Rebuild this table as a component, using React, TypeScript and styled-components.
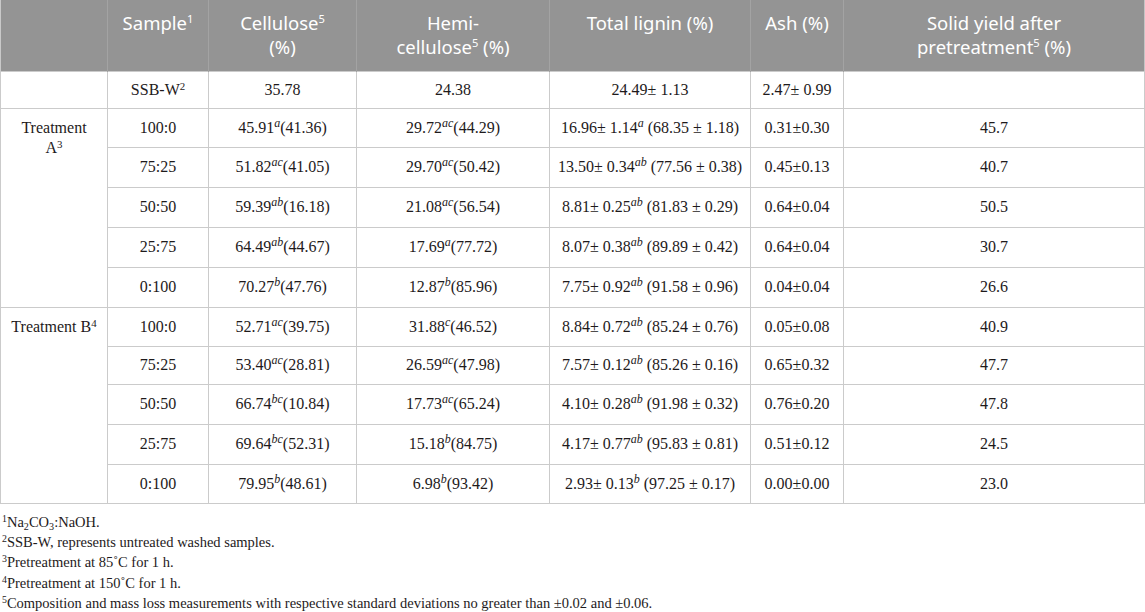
import React from "react";
import styled, { createGlobalStyle } from "styled-components";

const GlobalStyle = createGlobalStyle`
  html, body {
    margin: 0;
    padding: 0;
    background: #ffffff;
  }
  body {
    font-family: "Liberation Serif", "Times New Roman", serif;
    color: #231f20;
  }
`;

type Mark = [string, string, string];

type Row = {
  sample: string;
  cel: Mark;
  hemi: Mark;
  lig: Mark;
  ash: string;
  solid: string;
};

const groupA: Row[] = [
  { sample: "100:0", cel: ["45.91", "a", "41.36"], hemi: ["29.72", "ac", "44.29"], lig: ["16.96± 1.14", "a", "68.35 ± 1.18"], ash: "0.31±0.30", solid: "45.7" },
  { sample: "75:25", cel: ["51.82", "ac", "41.05"], hemi: ["29.70", "ac", "50.42"], lig: ["13.50± 0.34", "ab", "77.56 ± 0.38"], ash: "0.45±0.13", solid: "40.7" },
  { sample: "50:50", cel: ["59.39", "ab", "16.18"], hemi: ["21.08", "ac", "56.54"], lig: ["8.81± 0.25", "ab", "81.83 ± 0.29"], ash: "0.64±0.04", solid: "50.5" },
  { sample: "25:75", cel: ["64.49", "ab", "44.67"], hemi: ["17.69", "a", "77.72"], lig: ["8.07± 0.38", "ab", "89.89 ± 0.42"], ash: "0.64±0.04", solid: "30.7" },
  { sample: "0:100", cel: ["70.27", "b", "47.76"], hemi: ["12.87", "b", "85.96"], lig: ["7.75± 0.92", "ab", "91.58 ± 0.96"], ash: "0.04±0.04", solid: "26.6" },
];

const groupB: Row[] = [
  { sample: "100:0", cel: ["52.71", "ac", "39.75"], hemi: ["31.88", "c", "46.52"], lig: ["8.84± 0.72", "ab", "85.24 ± 0.76"], ash: "0.05±0.08", solid: "40.9" },
  { sample: "75:25", cel: ["53.40", "ac", "28.81"], hemi: ["26.59", "ac", "47.98"], lig: ["7.57± 0.12", "ab", "85.26 ± 0.16"], ash: "0.65±0.32", solid: "47.7" },
  { sample: "50:50", cel: ["66.74", "bc", "10.84"], hemi: ["17.73", "ac", "65.24"], lig: ["4.10± 0.28", "ab", "91.98 ± 0.32"], ash: "0.76±0.20", solid: "47.8" },
  { sample: "25:75", cel: ["69.64", "bc", "52.31"], hemi: ["15.18", "b", "84.75"], lig: ["4.17± 0.77", "ab", "95.83 ± 0.81"], ash: "0.51±0.12", solid: "24.5" },
  { sample: "0:100", cel: ["79.95", "b", "48.61"], hemi: ["6.98", "b", "93.42"], lig: ["2.93± 0.13", "b", "97.25 ± 0.17"], ash: "0.00±0.00", solid: "23.0" },
];

const Page = styled.div`
  width: 1145px;
`;

const Table = styled.table`
  width: 1144px;
  border-collapse: collapse;
  table-layout: fixed;
  border-left: 1px solid #c9c9c9;
  border-right: 1px solid #c4c4c4;
`;

const HeadCell = styled.th`
  background: #949494;
  color: #ffffff;
  font-family: "Noto Sans", "Open Sans", sans-serif;
  font-weight: 400;
  font-size: 18.5px;
  line-height: 24px;
  text-align: center;
  vertical-align: top;
  padding: 11px 2px 0;
  height: 71px;
  box-sizing: border-box;
  border-left: 1px solid #a3a3a3;
  white-space: nowrap;
  &:first-child {
    border-left: none;
  }
`;

const BodyRow = styled.tr<{ $h: number }>`
  height: ${(p) => p.$h}px;
`;

const Cell = styled.td`
  font-size: 16px;
  line-height: 20px;
  text-align: center;
  vertical-align: middle;
  padding: 0 4px;
  border: 1px solid #cbcbcb;
  white-space: nowrap;
  color: #1e1a1b;
`;

const GroupCell = styled(Cell)`
  vertical-align: top;
  padding-top: 9px;
  white-space: normal;
`;

const HSup = styled.sup`
  font-size: 0.6em;
  line-height: 0;
  vertical-align: 0.65em;
`;

const Sup = styled.sup<{ $italic?: boolean }>`
  font-size: ${(p) => (p.$italic ? "0.75em" : "0.68em")};
  line-height: 0;
  vertical-align: 0.5em;
  font-style: ${(p) => (p.$italic ? "italic" : "normal")};
`;

const Sub = styled.sub`
  font-size: 0.7em;
  line-height: 0;
  vertical-align: -0.25em;
`;

const Notes = styled.div`
  padding: 8px 0 0 2px;
  font-size: 14.5px;
  line-height: 20.4px;
  color: #1e1a1b;
`;

const Note = styled.div``;

const Marked = ({ v, gap }: { v: Mark; gap?: boolean }) => (
  <>
    {v[0]}
    <Sup $italic>{v[1]}</Sup>
    {gap ? " " : ""}({v[2]})
  </>
);

const heights = [39, 40, 40, 40, 40, 39, 38, 40, 40, 39];

const Group = ({ label, rows, offset }: { label: React.ReactNode; rows: Row[]; offset: number }) => (
  <>
    {rows.map((r, i) => (
      <BodyRow key={r.sample} $h={heights[offset + i]}>
        {i === 0 && <GroupCell rowSpan={rows.length}>{label}</GroupCell>}
        <Cell>{r.sample}</Cell>
        <Cell>
          <Marked v={r.cel} />
        </Cell>
        <Cell>
          <Marked v={r.hemi} />
        </Cell>
        <Cell>
          <Marked v={r.lig} gap />
        </Cell>
        <Cell>{r.ash}</Cell>
        <Cell>{r.solid}</Cell>
      </BodyRow>
    ))}
  </>
);

const App = () => (
  <Page>
    <GlobalStyle />
    <Table>
      <colgroup>
        <col style={{ width: 107 }} />
        <col style={{ width: 101 }} />
        <col style={{ width: 148 }} />
        <col style={{ width: 193 }} />
        <col style={{ width: 201 }} />
        <col style={{ width: 93 }} />
        <col style={{ width: 301 }} />
      </colgroup>
      <thead>
        <tr>
          <HeadCell />
          <HeadCell>
            Sample<HSup>1</HSup>
          </HeadCell>
          <HeadCell>
            Cellulose<HSup>5</HSup>
            <br />
            (%)
          </HeadCell>
          <HeadCell>
            Hemi-
            <br />
            cellulose<HSup>5</HSup> (%)
          </HeadCell>
          <HeadCell>Total lignin (%)</HeadCell>
          <HeadCell>Ash (%)</HeadCell>
          <HeadCell>
            Solid yield after
            <br />
            pretreatment<HSup>5</HSup> (%)
          </HeadCell>
        </tr>
      </thead>
      <tbody>
        <BodyRow $h={37}>
          <Cell />
          <Cell>
            SSB-W<Sup>2</Sup>
          </Cell>
          <Cell>35.78</Cell>
          <Cell>24.38</Cell>
          <Cell>24.49± 1.13</Cell>
          <Cell>2.47± 0.99</Cell>
          <Cell />
        </BodyRow>
        <Group
          offset={0}
          rows={groupA}
          label={
            <>
              Treatment
              <br />A<Sup>3</Sup>
            </>
          }
        />
        <Group
          offset={5}
          rows={groupB}
          label={
            <>
              Treatment B<Sup>4</Sup>
            </>
          }
        />
      </tbody>
    </Table>
    <Notes>
      <Note>
        <Sup>1</Sup>Na<Sub>2</Sub>CO<Sub>3</Sub>:NaOH.
      </Note>
      <Note>
        <Sup>2</Sup>SSB-W, represents untreated washed samples.
      </Note>
      <Note>
        <Sup>3</Sup>Pretreatment at 85˚C for 1 h.
      </Note>
      <Note>
        <Sup>4</Sup>Pretreatment at 150˚C for 1 h.
      </Note>
      <Note>
        <Sup>5</Sup>Composition and mass loss measurements with respective standard deviations no greater than ±0.02 and ±0.06.
      </Note>
    </Notes>
  </Page>
);

export default App;
